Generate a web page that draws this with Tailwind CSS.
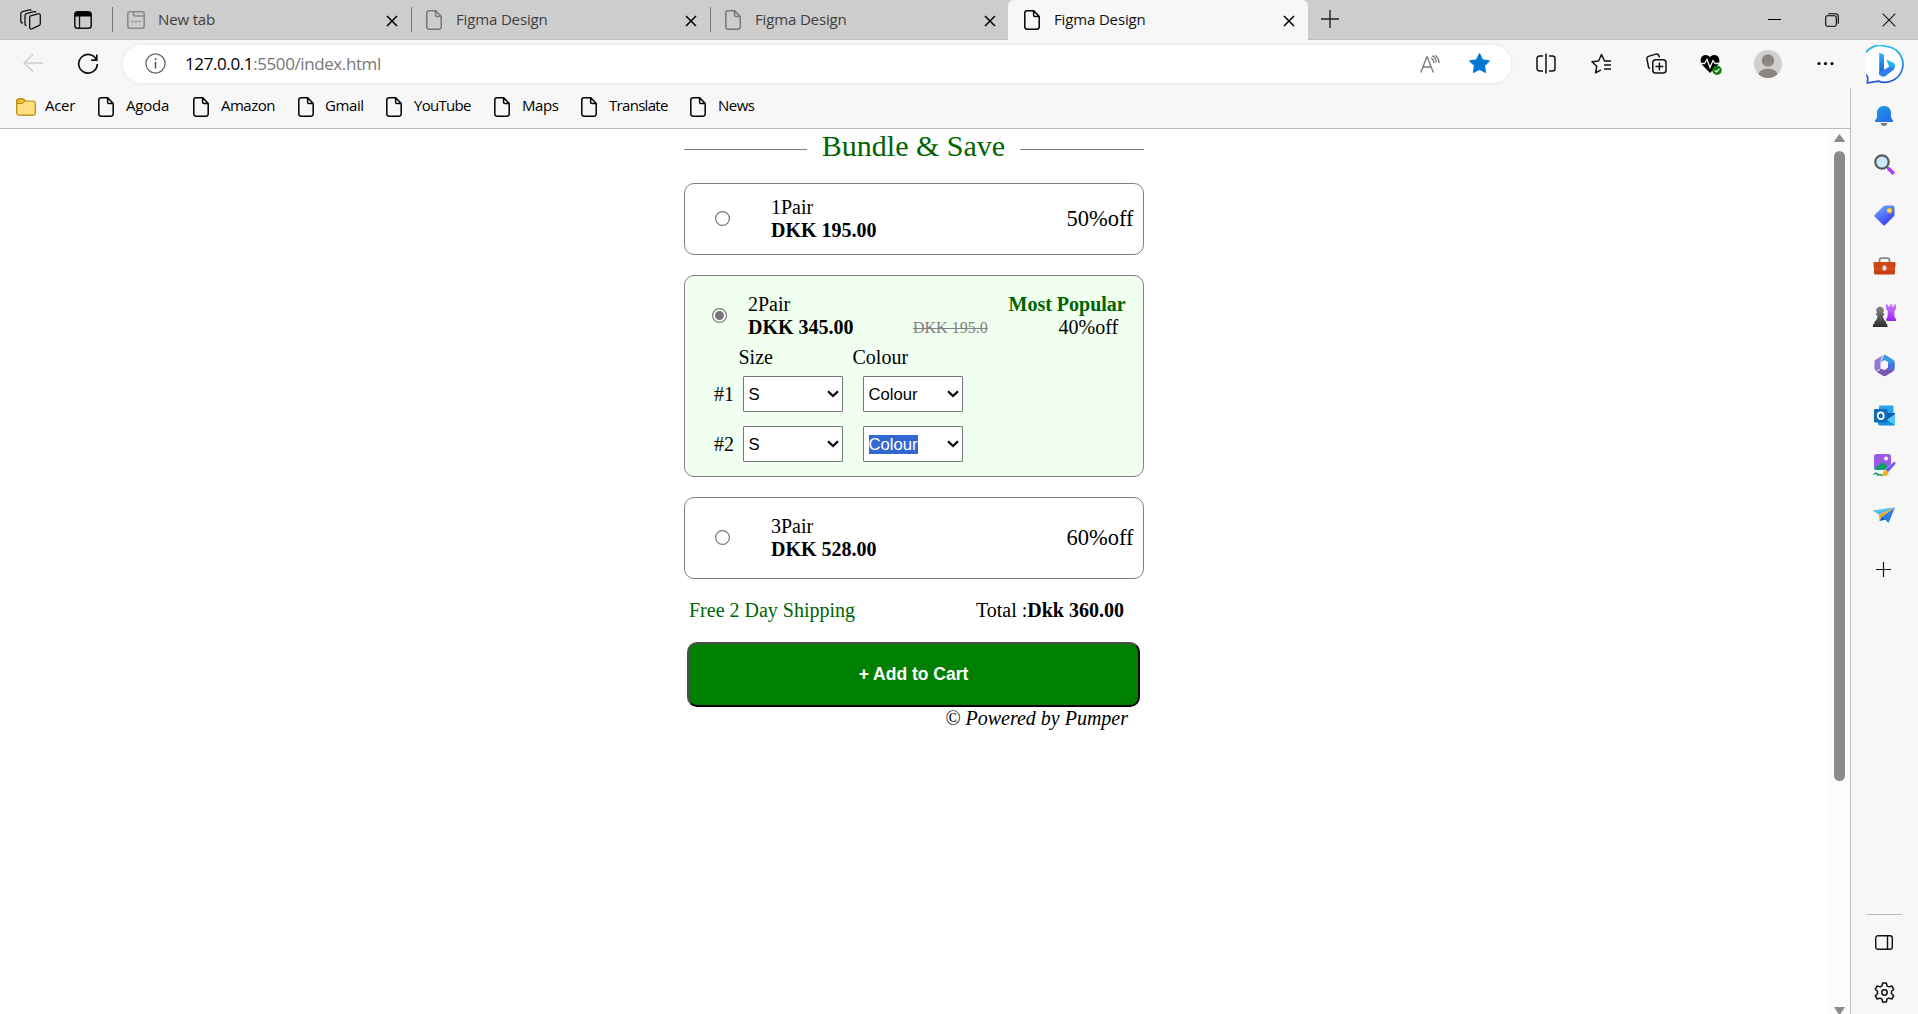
<!DOCTYPE html>
<html lang="en">
<head>
<meta charset="utf-8">
<title>Figma Design</title>
<script src="https://cdn.jsdelivr.net/npm/@tailwindcss/browser@4"></script>
</head>
<body class="w-[1918px] h-[1014px] overflow-hidden bg-[#f7f7f7] text-black font-['Open_Sans','Noto_Sans',sans-serif] flex flex-col">

<svg class="absolute w-0 h-0">
  <defs>
  <symbol id="doc" viewBox="0 0 16 20"><path d="M3 .8h6.800l5.400 5.600V17a2.200 2.200 0 0 1-2.200 2.200H3A2.200 2.200 0 0 1 .8 17V3A2.200 2.200 0 0 1 3 .8zM9.600 1v4.200c0 .9.500 1.400 1.400 1.400H15" fill="none" stroke="currentColor" stroke-width="1.500" stroke-linejoin="round"/></symbol>
  <symbol id="x" viewBox="0 0 12 12"><path d="M1 1l10 10M11 1L1 11" fill="none" stroke="currentColor" stroke-width="1.500"/></symbol>
  <symbol id="chev" viewBox="0 0 12 8"><path d="M1 1.300l5 4.700 5-4.700" fill="none" stroke="currentColor" stroke-width="2.200"/></symbol>
  <linearGradient id="gBell" x1="0" y1="0" x2="1" y2="1"><stop offset="0" stop-color="#1aa0e0"/><stop offset="1" stop-color="#2a63f0"/></linearGradient>
  <linearGradient id="gBing" x1="0" y1="0" x2="0" y2="1"><stop offset="0" stop-color="#27c0f2"/><stop offset="1" stop-color="#1f4fd8"/></linearGradient>
  <linearGradient id="gTag" x1="0" y1="0" x2=".6" y2="1"><stop offset="0" stop-color="#6cb4ff"/><stop offset="1" stop-color="#3a3df5"/></linearGradient>
  <linearGradient id="gPur" x1="0" y1="0" x2="0" y2="1"><stop offset="0" stop-color="#c77dff"/><stop offset="1" stop-color="#a020f0"/></linearGradient>
  <linearGradient id="gGray" x1="0" y1="0" x2="0" y2="1"><stop offset="0" stop-color="#8a8a88"/><stop offset="1" stop-color="#2e2e2e"/></linearGradient>
  <linearGradient id="gBox" x1="0" y1="0" x2="0" y2="1"><stop offset="0" stop-color="#e2571e"/><stop offset="1" stop-color="#bf3a10"/></linearGradient>
  </defs>
</svg>

<!-- Tab strip -->
<header class="h-10 shrink-0 flex bg-[#cdcdcd] border-b border-[#bdbdbd] text-[15px] tracking-[-0.15px] text-[#3f3f3f]">
  <div class="w-[112px] shrink-0 flex items-center pl-5 gap-[33px] text-[#111]">
    <svg class="size-[21px]" viewBox="0 0 21 21" fill="none" stroke="currentColor" stroke-width="1.300" stroke-linejoin="round"><path d="M10.500 6.800l7.500-2c1.400-.4 2.300.3 2.300 1.600v8.200c0 1-.5 1.700-1.500 2.100l-6.300 3c-1.600.8-2.800.2-2.800-1.400V9c0-1.200.1-1.900.8-2.200zM6.500 16.500c-1 0-1.500-.6-1.500-1.600V7c0-1.300.3-2 1.500-2.400l7.500-2c1-.2 1.500-.1 2 .7M2.800 14C1.500 14 .8 13.500.8 12.200V5c0-1.300.4-2 1.600-2.300l7-1.800c1-.2 1.500-.1 2 .6"/></svg>
    <svg class="size-[18px]" viewBox="0 0 18 18"><rect x=".8" y=".8" width="16.400" height="16.400" rx="2.800" fill="none" stroke="#111" stroke-width="1.500"/><path d="M1 5.500V3.500A2.500 2.500 0 0 1 3.500 1h11A2.500 2.500 0 0 1 17 3.500v2z" fill="#000"/><path d="M5.500 5v12" stroke="#111" stroke-width="1.300"/></svg>
  </div>
  <div class="w-[299px] shrink-0 flex items-center">
    <span class="w-px h-[25px] bg-[#777]"></span>
    <svg class="ml-3.5 size-[18px] text-[#888]" viewBox="0 0 18 18" fill="none" stroke="currentColor" stroke-width="1.500"><rect x=".8" y=".8" width="16.400" height="16.400" rx="2.500"/><path d="M6.500 1v2.500c0 1 .5 1.500 1.500 1.500h9M4.500 10.500h2M8 10.500h2M11.500 10.500h2"/></svg>
    <span class="ml-[13px] w-[228px] mb-px">New tab</span>
    <svg class="size-3 mt-0.5 text-black"><use href="#x"/></svg>
  </div>
  <div class="w-[299px] shrink-0 flex items-center">
    <span class="w-px h-[25px] bg-[#777]"></span>
    <svg class="ml-3.5 w-4 h-5 text-[#777]"><use href="#doc"/></svg>
    <span class="ml-[14px] w-[229px] mb-px">Figma Design</span>
    <svg class="size-3 mt-0.5 text-black"><use href="#x"/></svg>
  </div>
  <div class="w-[298px] shrink-0 flex items-center">
    <span class="w-px h-[25px] bg-[#777]"></span>
    <svg class="ml-3.5 w-4 h-5 text-[#777]"><use href="#doc"/></svg>
    <span class="ml-[14px] w-[229px] mb-px">Figma Design</span>
    <svg class="size-3 mt-0.5 text-black"><use href="#x"/></svg>
  </div>
  <div class="w-[300px] h-10 shrink-0 flex items-center bg-[#f7f7f7] rounded-t-[6px] text-[#111]">
    <svg class="ml-4 w-4 h-5 text-black"><use href="#doc"/></svg>
    <span class="ml-[14px] w-[229px] mb-0.5">Figma Design</span>
    <svg class="size-3 mt-px text-black"><use href="#x"/></svg>
  </div>
  <svg class="ml-[13px] mt-[10px] size-[18px]" viewBox="0 0 18 18"><path d="M9 0v18M0 9h18" stroke="#222" stroke-width="1.400"/></svg>
  <div class="ml-auto mr-[22px] h-10 flex items-center gap-[43px]">
    <svg class="size-[14px]" viewBox="0 0 14 14"><path d="M0 6.500h13" stroke="#000"/></svg>
    <svg class="size-[14px]" viewBox="0 0 14 14" fill="none" stroke="#000" stroke-width="1.100"><rect x=".7" y="2.700" width="10.600" height="10.600" rx="1.800"/><path d="M3.200.7h7.300a2.800 2.800 0 0 1 2.800 2.800v7.300"/></svg>
    <svg class="size-[14px]" viewBox="0 0 14 14"><path d="M.7.700l12.600 12.600M13.300.700L.7 13.300" stroke="#111" stroke-width="1.100"/></svg>
  </div>
</header>

<!-- Toolbar -->
<div class="h-12 shrink-0 flex items-center bg-[#f7f7f7]">
  <svg class="ml-[23px] mb-0.5 w-5 h-[18px]" viewBox="0 0 20 18"><path d="M20 9H1M10 .5L1 9l9 8.500" fill="none" stroke="#cdcdcd" stroke-width="1.500"/></svg>
  <svg class="ml-[34px] size-[22px]" viewBox="0 0 22 22" fill="none" stroke="#111" stroke-width="1.700"><path d="M19.500 7A9.300 9.300 0 1 0 20.300 11M19.800 1.500v5.700h-5.700"/></svg>
  <div class="ml-6 w-[1388px] h-[38px] rounded-full bg-white shadow-[0_0_4px_rgba(0,0,0,0.08)] flex items-center">
    <svg class="ml-[22px] mb-px size-[21px]" viewBox="0 0 21 21"><circle cx="10.500" cy="10.500" r="9.600" fill="none" stroke="#666" stroke-width="1.300"/><path d="M10.500 9v6.500" stroke="#555" stroke-width="1.500"/><circle cx="10.500" cy="6.300" r="1" fill="#555"/></svg>
    <span class="ml-[19px] text-[17px] leading-6 tracking-[-0.4px] text-[#777] whitespace-nowrap"><span class="text-black">127.0.0.1</span>:5500/index.html</span>
    <svg class="ml-auto w-5 h-[18px]" viewBox="0 0 20 18" fill="none" stroke="#777" stroke-width="1.300"><path d="M.8 17.500L6.800 2h.5l6 15.500M3 12h8M11 3c1.800.8 2.800 2.500 2.800 5M12.200.8c2.500 1 4 3.400 4 6.700M14.800.3C17.600 2 19 4.500 19 8"/></svg>
    <svg class="ml-[29px] mr-[21px] mb-px size-[21px]" viewBox="0 0 21 21"><path d="M10.500 1l2.900 6 6.600.9-4.800 4.600 1.200 6.700-5.900-3.200-5.900 3.200 1.200-6.700L1 7.900 7.600 7z" fill="#0078d4" stroke="#0078d4" stroke-width="1.500" stroke-linejoin="round"/></svg>
  </div>
  <svg class="ml-[25px] mb-px w-5 h-[21px]" viewBox="0 0 20 21" fill="none" stroke="#111" stroke-width="1.500"><path d="M7 3H3.500A2.500 2.500 0 0 0 1 5.500v10A2.500 2.500 0 0 0 3.500 18H7M13 3h3.500A2.500 2.500 0 0 1 19 5.500v10a2.500 2.500 0 0 1-2.500 2.500H13M10 .5v20"/></svg>
  <svg class="ml-[35px] mb-px w-[21px] h-[21px]" viewBox="0 0 21 21" fill="none" stroke="#111" stroke-width="1.500" stroke-linejoin="round"><path d="M20 8h-6.500L10.500 1.500 7.500 8 1 8.700l4.700 4.600-1.200 6.500 5.500-3M13 12h7M13 16h7"/></svg>
  <svg class="ml-[34px] mb-px w-[21px] h-[21px]" viewBox="0 0 21 21" fill="none" stroke="#111" stroke-width="1.500"><rect x="6.800" y="6.800" width="13.200" height="13.200" rx="2.800"/><path d="M13.400 9.500v8M9.400 13.400h8M4 15.500c-.8-.3-1.200-.8-1.500-1.600L.9 5.800c-.2-1.200.3-2.100 1.500-2.400l7.500-2.300c1.500-.4 2.500.2 2.900 1.400l.6 2"/></svg>
  <svg class="ml-[33px] mt-px w-[22px] h-[21px]" viewBox="0 0 22 21"><path d="M10 19L1.800 10.500C-.5 7.500.5 1 5.500 1 8 1 10 3 10 3s2-2 4.500-2c5 0 6 6.500 3.700 9.500z" fill="#000"/><path d="M0 9.500h4.500l2.500-4 3 8 3-7 2 3h5" fill="none" stroke="#f7f7f7" stroke-width="1.300"/><circle cx="17" cy="16.300" r="4.700" fill="#107c10"/><path d="M14.700 16.300l1.700 1.700 3-3.200" fill="none" stroke="#fff" stroke-width="1.100"/></svg>
  <svg class="ml-8 size-7" viewBox="0 0 28 28"><circle cx="14" cy="14" r="14" fill="#d2d0ce"/><circle cx="14" cy="10.500" r="6.200" fill="#8a8684"/><path d="M4.500 24.300C5.500 20.500 9 18.700 14 18.700s8.500 1.800 9.500 5.600A14 14 0 0 1 4.500 24.300z" fill="#8a8684"/></svg>
  <svg class="ml-[35px] mb-px w-[17px] h-[5px]" viewBox="0 0 17 5"><circle cx="2" cy="2.500" r="1.600"/><circle cx="8.500" cy="2.500" r="1.600"/><circle cx="15" cy="2.500" r="1.600"/></svg>
  <svg class="ml-8 mt-px size-[39px]" viewBox="0 0 39 39"><path d="M19.500 1.300a18 18 0 1 1-7 34.800L1.300 38c.4-2.200.6-4 .3-6.500A18 18 0 0 1 19.500 1.300z" fill="#fff" stroke="url(#gBing)" stroke-width="1.700" stroke-linejoin="round"/><path d="M13.200 7.500l4.800 2.300v17.500l-4.800 2.500z" fill="url(#gBing)"/><path d="M20.500 14.500l7.200 3.500c2 1.200 1.800 5-.2 6.500l-4.500-2.700z" fill="#23b4ef"/><path d="M13.200 27.500l10-5.700c2-1 5 .5 4.800 2.700l-8.500 6.500c-3 2-6.300-.3-6.300-3.500z" fill="#2f7ff0"/></svg>
</div>

<div class="flex-1 min-h-0 flex">
  <div class="w-[1850px] shrink-0 flex flex-col">
    <!-- Bookmarks bar -->
    <nav class="h-[41px] shrink-0 border-b border-[#bbb] flex items-center pl-4 pb-1.5 text-[15px] leading-5 whitespace-nowrap">
      <svg class="w-5 h-[18px] mt-1" viewBox="0 0 20 18"><path d="M.7 3A2.200 2.200 0 0 1 3 .8h4L9.500 3H17a2.200 2.200 0 0 1 2.300 2.200V15a2.200 2.200 0 0 1-2.300 2.200H3A2.200 2.200 0 0 1 .7 15z" fill="#ffdf80" stroke="#b8860b" stroke-width="1.200"/><path d="M.9 5.500V3A2 2 0 0 1 3 1h4l2 2-2.500 2.500z" fill="#f0b92e" stroke="#b8860b"/></svg>
      <span class="ml-[9px] w-[53px] tracking-[-0.3px]">Acer</span>
      <svg class="w-4 h-5 mt-1"><use href="#doc"/></svg><span class="ml-3 w-[67px] tracking-[-0.2px]">Agoda</span>
      <svg class="w-4 h-5 mt-1"><use href="#doc"/></svg><span class="ml-3 w-[77px] tracking-[-0.5px]">Amazon</span>
      <svg class="w-4 h-5 mt-1"><use href="#doc"/></svg><span class="ml-[11px] w-[61px] tracking-[-0.4px]">Gmail</span>
      <svg class="w-4 h-5 mt-1"><use href="#doc"/></svg><span class="ml-3 w-[80px] tracking-[-0.7px]">YouTube</span>
      <svg class="w-4 h-5 mt-1"><use href="#doc"/></svg><span class="ml-3 w-[59px] tracking-[-0.4px]">Maps</span>
      <svg class="w-4 h-5 mt-1"><use href="#doc"/></svg><span class="ml-3 w-[81px] tracking-[-0.7px]">Translate</span>
      <svg class="w-4 h-5 mt-1"><use href="#doc"/></svg><span class="ml-3 tracking-[-0.5px]">News</span>
    </nav>

    <div class="flex-1 min-h-0 flex bg-white">
      <!-- Page content -->
      <main class="ml-[684px] w-[460px] shrink-0 font-['Liberation_Serif',serif] text-[20px] leading-[23px]">
        <div class="h-[35px] flex items-center justify-between text-[#006400]">
          <span class="h-px w-[123px] mt-1.5 bg-[gray]"></span>
          <h1 class="text-[30px] leading-[34px] mb-px">Bundle &amp; Save</h1>
          <span class="h-px w-[124px] mt-1.5 bg-[gray]"></span>
        </div>

        <section class="mt-[19px] h-[72px] border border-[gray] rounded-[10px] flex items-center pl-[30px] pr-[9.500px]">
          <svg class="size-[15px] mb-px" viewBox="0 0 15 15"><circle cx="7.500" cy="7.500" r="6.900" fill="#fff" stroke="#767676" stroke-width="1.200"/></svg>
          <div class="ml-[41px]"><p>1Pair</p><p class="font-bold">DKK 195.00</p></div>
          <span class="ml-auto text-[22.5px] leading-[26px]">50%off</span>
        </section>

        <section class="mt-5 h-[202px] border border-[gray] rounded-[10px] bg-[#f0fff0] pt-[17px] flex flex-col">
          <div class="flex pl-[27px]">
            <svg class="size-[15px] mt-[15px]" viewBox="0 0 15 15"><circle cx="7.500" cy="7.500" r="6.900" fill="#fff" stroke="#767676" stroke-width="1.200"/><circle cx="7.500" cy="7.500" r="4.500" fill="#767676"/></svg>
            <div class="ml-[21px] w-[165px]"><p>2Pair</p><p class="font-bold">DKK 345.00</p></div>
            <span class="mt-[23px] w-[95.500px] text-base leading-[23px] text-[gray] line-through">DKK 195.0</span>
            <div><p class="font-bold text-[#006400]">Most Popular</p><p class="pl-[50px]">40%off</p></div>
          </div>
          <div class="mt-[7px] pl-[53.500px] flex"><span class="w-[114px]">Size</span><span>Colour</span></div>
          <div class="mt-[7px] pl-[29px] flex items-center">
            <span class="w-[29px] mt-px">#1</span>
            <div class="w-[100px] h-9 border border-[#767676] rounded-[1px] bg-white flex items-center justify-between pl-[4.500px] pr-[3px] font-['Liberation_Sans',sans-serif] text-[16.670px] leading-[19px]"><span>S</span><svg class="w-3 h-2"><use href="#chev"/></svg></div>
            <div class="ml-5 w-[100px] h-9 border border-[#767676] rounded-[1px] bg-white flex items-center justify-between pl-[4.500px] pr-[3px] font-['Liberation_Sans',sans-serif] text-[16.670px] leading-[19px]"><span>Colour</span><svg class="w-3 h-2"><use href="#chev"/></svg></div>
          </div>
          <div class="mt-3.5 pl-[29px] flex items-center">
            <span class="w-[29px] mt-px">#2</span>
            <div class="w-[100px] h-9 border border-[#767676] rounded-[1px] bg-white flex items-center justify-between pl-[4.500px] pr-[3px] font-['Liberation_Sans',sans-serif] text-[16.670px] leading-[19px]"><span>S</span><svg class="w-3 h-2"><use href="#chev"/></svg></div>
            <div class="ml-5 w-[100px] h-9 border border-[#767676] rounded-[1px] bg-white flex items-center justify-between pl-[4.500px] pr-[3px] font-['Liberation_Sans',sans-serif] text-[16.670px] leading-[19px]"><span class="bg-[#3367d1] text-white">Colour</span><svg class="w-3 h-2"><use href="#chev"/></svg></div>
          </div>
        </section>

        <section class="mt-5 h-[82px] border border-[gray] rounded-[10px] flex items-center pl-[30px] pr-[9.500px]">
          <svg class="size-[15px] mb-px" viewBox="0 0 15 15"><circle cx="7.500" cy="7.500" r="6.900" fill="#fff" stroke="#767676" stroke-width="1.200"/></svg>
          <div class="ml-[41px]"><p>3Pair</p><p class="font-bold">DKK 528.00</p></div>
          <span class="ml-auto text-[22.5px] leading-[26px]">60%off</span>
        </section>

        <div class="mt-5 pl-[5px] pr-5 flex justify-between"><span class="text-[#006400]">Free 2 Day Shipping</span><span>Total :<b>Dkk 360.00</b></span></div>
        <button class="block mt-5 ml-[3px] w-[453px] h-[65px] pb-0.5 rounded-[10px] border-2 border-t-[#4d4d4d] border-l-[#4d4d4d] border-r-black border-b-black bg-[green] text-white font-bold font-['Liberation_Sans',sans-serif] text-[17.5px] leading-5">+ Add to Cart</button>
        <p class="pr-4 text-right italic">© Powered by Pumper</p>
      </main>

      <!-- Scrollbar -->
      <div class="ml-auto w-[21px] bg-[#fcfcfc] flex flex-col items-center pt-[5px]">
        <svg class="w-[11px] h-2" viewBox="0 0 11 8"><path d="M5.500 0L11 7.500Q11 8 10 8H1Q0 8 0 7.500z" fill="#8b8b8b"/></svg>
        <div class="mt-[9px] w-[11px] h-[630px] rounded-full bg-[#8b8b8b]"></div>
        <svg class="mt-auto w-[11px] h-[7px]" viewBox="0 0 11 7"><path d="M0 0H11L6.500 7h-2z" fill="#8b8b8b"/></svg>
      </div>
    </div>
  </div>

  <!-- Sidebar -->
  <aside class="flex-1 border-l border-[#bbb] flex flex-col items-center pt-0.5 pr-px">
    <div class="h-[50px] flex items-center pt-0.5"><svg class="w-[18px] h-5" viewBox="0 0 18 20"><path d="M9 0c4.500 0 7 3 7 7v4.500l2 3V16H0v-1.500l2-3V7c0-4 2.500-7 7-7z" fill="url(#gBell)"/><path d="M5.500 17h7c-.5 2-2 3-3.500 3s-3-1-3.500-3z" fill="#777"/></svg></div>
    <div class="h-[50px] flex items-center pb-px"><svg class="w-[21px] h-[21px]" viewBox="0 0 21 21"><path d="M12.500 12.500l2 2" stroke="#777" stroke-width="2"/><path d="M15 15l3.800 3.800" stroke="#b23cf5" stroke-width="3.600" stroke-linecap="round"/><circle cx="8" cy="8" r="6.700" fill="#c8e8fc" stroke="#5a5a5a" stroke-width="2.200"/></svg></div>
    <div class="h-[50px] flex items-center"><svg class="w-[21px] h-[21px]" viewBox="0 0 21 21"><path d="M11.500.5h7a2 2 0 0 1 2 2v7c0 .8-.3 1.300-.8 1.900l-8.300 8.400c-.8.800-1.700.8-2.500 0L1 12c-.8-.8-.8-1.700 0-2.500L9.500 1.200c.6-.5 1.200-.7 2-.7z" fill="url(#gTag)"/><circle cx="15.500" cy="5.500" r="2" fill="#fff6cf" stroke="#f5b915" stroke-width="1.600"/></svg></div>
    <div class="h-[50px] flex items-center pt-0.5"><svg class="w-[23px] h-[18px]" viewBox="0 0 23 18"><path d="M6.500 5V3.200C6.500 2 7.300 1.200 8.500 1.200h6c1.200 0 2 .8 2 2V5" fill="none" stroke="#888" stroke-width="1.800"/><rect x="1" y="8" width="21" height="9.500" rx="1.500" fill="url(#gBox)"/><path d="M1.500 5h20a1 1 0 0 1 1 1v3c0 1-.5 1.500-1.500 1.500H2C1 10.500.5 10 .5 9V6a1 1 0 0 1 1-1z" fill="#cc4715"/><rect x="9.500" y="8.500" width="4" height="5" rx="1.500" fill="#ddd"/></svg></div>
    <div class="h-[50px] flex items-center"><svg class="w-[23px] h-[23px]" viewBox="0 0 23 23"><path d="M13 .5h2v2h1.700v-2h2.600v2H21v-2h2V5l-1.800 2 .3 6 1.500 2v2h-9.500l-.5-2 1.500-2 .3-6L13 5z" fill="url(#gPur)"/><path d="M7 2.500a4 4 0 0 1 2.800 6.800h1.500v2H10c0 3 1 5 3 6.500v1.500l1.500 1.500V23H0v-2.200l1.500-1.500v-1.500c2-1.500 3-3.500 3-6.500H3v-2h1.200A4 4 0 0 1 7 2.500z" fill="url(#gGray)"/></svg></div>
    <div class="h-[50px] flex items-center"><svg class="w-[21px] h-[23px]" viewBox="0 0 21 23"><path d="M10.500.5l8.500 5c1 .6 1.500 1.200 1.500 2.500v6l-6.500-3.500V8l-3.500-2-4 2.500z" fill="#3a9ce8"/><path d="M10.500.5c-2.500 2-4 4-4 8v6l-4 2.500c-1.300-.7-2-1.500-2-3V8C.5 6.700 1 6 2 5.400z" fill="#8e78dc"/><path d="M20.500 14c0 1.700-.4 2.700-1.500 3.400L12 21.800c-1 .6-2 .6-3 0l-7-4.400c3 .5 4.500-2.900 4.500-2.900l4 1.500 3.500-2.500v-3z" fill="#7a55b8"/><path d="M14 10.500L20.500 8v6.500c-1 2-4 3-6.500 1z" fill="#4c6ee0"/><path d="M10.500 7.500L14 9.500v4l-3.500 2L7 13.500v-4z" fill="#f7f7f7"/></svg></div>
    <div class="h-[50px] flex items-center"><svg class="w-[21px] h-[21px]" viewBox="0 0 21 21"><path d="M6 .5h12.500a1 1 0 0 1 1 1V10H5V1.500a1 1 0 0 1 1-1z" fill="#28a8ea"/><path d="M5 8h16v11.500a1 1 0 0 1-1 1H6a2 2 0 0 1-2-2z" fill="#1490df"/><path d="M21 9v11L12 14.500z" fill="#50c9fa"/><path d="M21 8v1l-8 5.500L12 8z" fill="#0a5fa8"/><rect y="4" width="13.500" height="13.500" rx="1.300" fill="#0f6cbd"/><ellipse cx="6.700" cy="10.700" rx="3" ry="3.400" fill="none" stroke="#fff" stroke-width="1.700"/></svg></div>
    <div class="h-[50px] flex items-center"><svg class="w-[23px] h-[23px]" viewBox="0 0 23 23"><rect x="1" width="17" height="16" rx="2.500" fill="#9b5be8"/><path d="M1.500 14.500l5.500-5c1.500-1.300 3-1.300 4.500 0l3.500 3v3.500H3.500c-1 0-2-.5-2-1.500z" fill="#159c6c"/><circle cx="13" cy="4.500" r="1.900" fill="#fff"/><path d="M12 16l8.500-8c1.500-1 3 .5 2 2L15 18.500z" fill="#6a55f0" stroke="#f7f7f7" stroke-width=".5"/><path d="M9.500 21.500c0-3 .5-5.500 3.500-5 2.500.5 3 3 1.500 4.500-1.300 1.300-3 1.300-5 .5z" fill="#f2b21e"/><path d="M.5 20.500c2.500-2.500 4-1 4 .3 1-.8 2.500-.3 5 .7" fill="none" stroke="#159c6c" stroke-width="1.500"/></svg></div>
    <div class="h-[50px] flex items-center"><svg class="w-[22px] h-[17px]" viewBox="0 0 22 17"><path d="M0 3.500L22 .5 6 7.500z" fill="#3fb1f2"/><path d="M22 .5L15.500 16 9 9.500z" fill="#2b7de6"/><path d="M6 7.500L22 .5 9 9.500 6.500 14z" fill="#f4a61d"/><path d="M6.500 14L9 9.500l3.500 3.300z" fill="#1459b8"/><path d="M0 3.500L22 .5 3.500 6z" fill="#5cc4fa"/></svg></div>
    <svg class="mt-[22px] mr-px size-[15px]" viewBox="0 0 15 15"><path d="M7.500 0v15M0 7.500h15" stroke="#111" stroke-width="1.200"/></svg>
    <span class="mt-auto w-[35px] h-px bg-[#bbb]"></span>
    <svg class="mt-5 w-[18px] h-[15px]" viewBox="0 0 18 15" fill="none" stroke="#111" stroke-width="1.400"><rect x=".7" y=".7" width="16.600" height="13.600" rx="2.300"/><path d="M12.500 1v13"/></svg>
    <svg class="mt-8 mb-[11px] size-[21px]" viewBox="0 0 21 21" fill="none" stroke="#111" stroke-width="1.500" stroke-linejoin="round"><path d="M8.700.9h3.600l.7 2.900 1.900 1.100 2.900-.9 1.900 3.200-2.200 2.100v2.400l2.200 2.100-1.900 3.200-2.900-.9-1.900 1.100-.7 2.900H8.700L8 17.200l-1.900-1.100-2.900.9-1.900-3.200 2.200-2.100V9.300L1.300 7.200 3.200 4l2.900.9L8 3.800z"/><circle cx="10.500" cy="10.500" r="2.700"/></svg>
  </aside>
</div>
</body>
</html>
